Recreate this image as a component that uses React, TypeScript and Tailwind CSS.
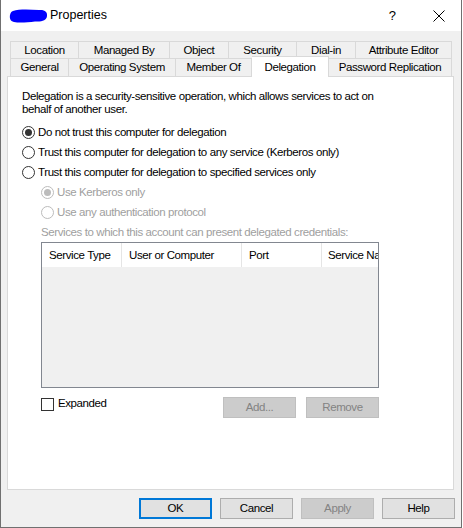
import React from "react";

const F = { fontFamily: '"Liberation Sans", Arial, sans-serif' };

function Radio({ checked, disabled, label }: { checked?: boolean; disabled?: boolean; label: string }) {
  return (
    <div className="flex h-[20px] items-center">
      <div
        className={`flex h-[13px] w-[13px] items-center justify-center rounded-full border bg-white ${
          disabled ? "border-[#bcbcbc]" : "border-[#333333]"
        }`}
      >
        {checked && <div className={`h-[7px] w-[7px] rounded-full ${disabled ? "bg-[#bcbcbc]" : "bg-[#333333]"}`} />}
      </div>
      <span className={`ml-[3px] ${disabled ? "text-[#a0a0a0]" : "text-black"}`}>{label}</span>
    </div>
  );
}

function Tab({ label, w, first }: { label: string; w: string; first?: boolean }) {
  return (
    <div
      className={`${w} flex items-center justify-center border-t border-r border-[#d9d9d9] bg-[#f0f0f0] ${
        first ? "border-l" : ""
      }`}
    >
      {label}
    </div>
  );
}

function Btn({ label, disabled, def, w = "w-[73px]" }: { label: string; disabled?: boolean; def?: boolean; w?: string }) {
  if (def) {
    return (
      <div className={`${w} flex h-[21px] items-center justify-center border-2 border-[#0078d7] bg-[#e1e1e1] text-black`}>
        {label}
      </div>
    );
  }
  return (
    <div
      className={`${w} flex h-[21px] items-center justify-center border ${
        disabled ? "border-[#bfbfbf] bg-[#cccccc] text-[#838383]" : "border-[#adadad] bg-[#e1e1e1] text-black"
      }`}
    >
      {label}
    </div>
  );
}

export default function App() {
  return (
    <div
      className="flex h-[528px] w-[462px] flex-col border-l border-r border-b border-[#707070] bg-[#f0f0f0] text-[11.5px] leading-[13px] tracking-[-0.4px] text-black"
      style={F}
    >
      {/* title bar */}
      <div className="flex h-[31px] shrink-0 items-center bg-white tracking-normal">
        <svg width="40" height="16" viewBox="0 0 40 16" className="ml-[8px]">
          <path
            d="M4 3 C10 1, 20 1.5, 30 2 C36 1.5, 38.5 4, 38 8 C37.5 12.5, 33 14, 26 13.5 C18 14.5, 10 15, 5 14 C1 13, 0.5 10, 1 7 C1.5 4.5, 2.5 3.5, 4 3 Z"
            fill="#0000ff"
          />
        </svg>
        <span className="ml-[1px] text-[12.5px] text-black">Properties</span>
        <span className="ml-auto mr-[37px] text-[13px] text-black">?</span>
        <svg width="12" height="12" viewBox="0 0 12 12" className="mr-[16px]">
          <path d="M0.5 0.5 L11.5 11.5 M11.5 0.5 L0.5 11.5" stroke="#000" strokeWidth="1" />
        </svg>
      </div>

      {/* tabs */}
      <div className="ml-[9px] mt-[10px] flex h-[17px] shrink-0">
        <Tab first label="Location" w="w-[69px]" />
        <Tab label="Managed By" w="w-[91px]" />
        <Tab label="Object" w="w-[59px]" />
        <Tab label="Security" w="w-[68px]" />
        <Tab label="Dial-in" w="w-[59px]" />
        <Tab label="Attribute Editor" w="w-[96px]" />
      </div>
      <div className="relative z-10 ml-[9px] flex h-[18px] shrink-0 items-end">
        <Tab first label="General" w="w-[59px] h-[18px]" />
        <Tab label="Operating System" w="w-[107px] h-[18px]" />
        <Tab label="Member Of" w="w-[76px] h-[18px]" />
        <div className="mb-[-1px] flex h-[21px] w-[77px] items-start justify-center border-t border-r border-[#d9d9d9] bg-white pt-[4px]">
          Delegation
        </div>
        <Tab label="Password Replication" w="w-[123px] h-[18px]" />
      </div>

      {/* panel */}
      <div className="ml-[6px] flex h-[414px] w-[447px] shrink-0 flex-col border border-[#d9d9d9] bg-white pl-[14px]">
        <p className="mt-[13px] w-[380px]">
          Delegation is a security-sensitive operation, which allows services to act on behalf of another user.
        </p>
        <div className="mt-[6px]">
          <Radio checked label="Do not trust this computer for delegation" />
          <Radio label="Trust this computer for delegation to any service (Kerberos only)" />
          <Radio label="Trust this computer for delegation to specified services only" />
          <div className="ml-[19px]">
            <Radio checked disabled label="Use Kerberos only" />
            <Radio disabled label="Use any authentication protocol" />
            <div className="flex h-[20px] items-center text-[#a0a0a0]">
              Services to which this account can present delegated credentials:
            </div>
            <div className="flex h-[146px] w-[338px] flex-col border border-[#828790] bg-[#f0f0f0]">
              <div className="flex h-[24px] shrink-0 bg-white">
                <div className="flex w-[80px] items-center border-r border-[#e5e5e5] pl-[7px]">Service Type</div>
                <div className="flex w-[120px] items-center border-r border-[#e5e5e5] pl-[7px]">User or Computer</div>
                <div className="flex w-[80px] items-center border-r border-[#e5e5e5] pl-[7px]">Port</div>
                <div className="flex min-w-0 flex-1 items-center overflow-hidden whitespace-nowrap pl-[6px]">Service Na</div>
              </div>
            </div>
            <div className="mt-[9px] flex w-[338px] items-start">
              <div className="mt-[1px] flex items-center">
                <div className="h-[13px] w-[13px] border border-[#333333] bg-white" />
                <span className="ml-[4px] -mt-[2px]">Expanded</span>
              </div>
              <div className="ml-auto flex gap-[10px]">
                <Btn disabled label="Add..." />
                <Btn disabled label="Remove" />
              </div>
            </div>
          </div>
        </div>
      </div>

      {/* buttons */}
      <div className="mt-[8px] flex justify-end gap-[8px] pr-[6px]">
        <Btn def label="OK" />
        <Btn label="Cancel" />
        <Btn disabled label="Apply" />
        <Btn label="Help" />
      </div>
    </div>
  );
}
